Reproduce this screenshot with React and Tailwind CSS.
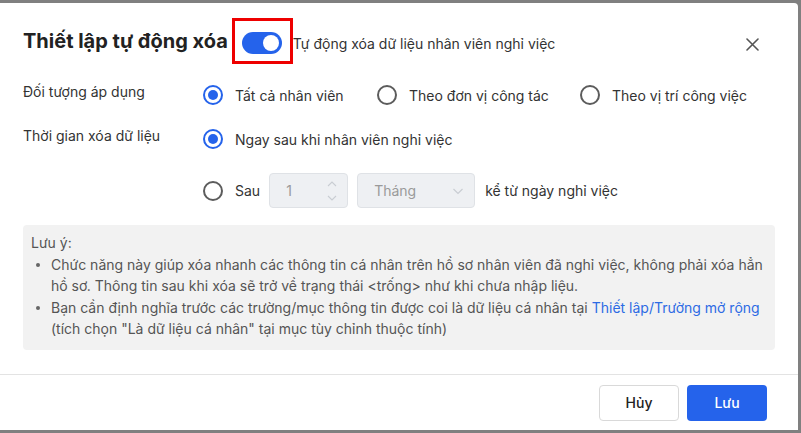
import React from "react";

const Radio = ({ checked }) => (
  <span
    className={`flex h-[20px] w-[20px] shrink-0 items-center justify-center rounded-full border-2 ${
      checked ? "border-[#2563eb]" : "border-[#5c5c5c]"
    }`}
  >
    {checked && <span className="h-[10px] w-[10px] rounded-full bg-[#2563eb]" />}
  </span>
);

const Option = ({ checked, label, className = "" }) => (
  <div className={`flex h-[20px] items-center ${className}`}>
    <Radio checked={checked} />
    <span className="ml-[12px] whitespace-nowrap text-[14px] text-[#333]">{label}</span>
  </div>
);

const App = () => {
  return (
    <div className="h-[433px] w-[801px] overflow-hidden bg-[#808080] pt-[3px] font-['Inter',sans-serif]">
      <div className="flex h-[427px] w-[798px] flex-col rounded-tr-[4px] bg-white">
        {/* Header */}
        <div className="flex items-center pl-[23px] pr-[39px] pt-[15px]">
          <h2 className="whitespace-nowrap text-[20px] font-bold leading-none text-[#222]">
            Thiết lập tự động xóa
          </h2>
          <div className="ml-[4px] flex h-[46px] w-[61px] items-center justify-center border-[3px] border-[#ee0000] pt-[3px]">
            <span className="flex h-[22px] w-[40px] items-center justify-end rounded-full bg-[#2563eb] pr-[3px]">
              <span className="h-[16px] w-[16px] rounded-full bg-white" />
            </span>
          </div>
          <span className="mt-[4px] whitespace-nowrap text-[14px] text-[#333]">
            Tự động xóa dữ liệu nhân viên nghỉ việc
          </span>
          <button className="ml-auto mt-[6px] flex h-[14px] w-[14px] items-center justify-center text-[#555]">
            <svg width="13" height="13" viewBox="0 0 13 13" fill="none" stroke="currentColor" strokeWidth="1.6" strokeLinecap="round">
              <path d="M1 1L12 12M12 1L1 12" />
            </svg>
          </button>
        </div>

        {/* Object row */}
        <div className="mt-[21px] flex items-start pl-[23px]">
          <div className="-mt-[3px] w-[180px] text-[14px] leading-[20px] text-[#333]">Đối tượng áp dụng</div>
          <Option checked label="Tất cả nhân viên" className="w-[174px]" />
          <Option label="Theo đơn vị công tác" className="w-[203px]" />
          <Option label="Theo vị trí công việc" />
        </div>

        {/* Time row */}
        <div className="mt-[24px] flex items-start pl-[23px]">
          <div className="-mt-[3px] w-[180px] text-[14px] leading-[20px] text-[#333]">Thời gian xóa dữ liệu</div>
          <Option checked label="Ngay sau khi nhân viên nghỉ việc" />
        </div>

        <div className="mt-[24px] flex h-[35px] items-center pl-[203px]">
          <Radio />
          <span className="ml-[12px] text-[14px] text-[#333]">Sau</span>
          <div className="ml-[9px] flex h-[35px] w-[79px] items-center justify-between rounded-[4px] border border-[#dfe2e6] bg-[#eef0f3] pl-[16px] pr-[9px]">
            <span className="text-[14px] text-[#9a9a9a]">1</span>
            <svg width="12" height="24" viewBox="0 0 12 24" fill="none" stroke="#c9cdd3" strokeWidth="1.1">
              <path d="M2 7L6 3L10 7M2 17L6 21L10 17" />
            </svg>
          </div>
          <div className="ml-[9px] flex h-[35px] w-[118px] items-center justify-between rounded-[4px] border border-[#dfe2e6] bg-[#eef0f3] pl-[16px] pr-[10px]">
            <span className="text-[14px] text-[#9a9a9a]">Tháng</span>
            <svg width="12" height="8" viewBox="0 0 12 8" fill="none" stroke="#c9cdd3" strokeWidth="1.2">
              <path d="M1.5 2L6 6.5L10.5 2" />
            </svg>
          </div>
          <span className="ml-[10px] whitespace-nowrap text-[14px] text-[#333]">kể từ ngày nghỉ việc</span>
        </div>

        {/* Note */}
        <div className="mx-[23px] mt-[17px] rounded-[4px] bg-[#f2f2f2] pb-[10px] pl-[8px] pt-[7px] text-[14px] leading-[21.5px] text-[#555]">
          <div>Lưu ý:</div>
          <div className="flex">
            <span className="ml-[5px] mt-[9px] h-[4px] w-[4px] shrink-0 rounded-full bg-[#666]" />
            <div className="ml-[11px] whitespace-nowrap">
              Chức năng này giúp xóa nhanh các thông tin cá nhân trên hồ sơ nhân viên đã nghỉ việc, không phải xóa hẳn
              <br />
              hồ sơ. Thông tin sau khi xóa sẽ trở về trạng thái &lt;trống&gt; như khi chưa nhập liệu.
            </div>
          </div>
          <div className="flex">
            <span className="ml-[5px] mt-[9px] h-[4px] w-[4px] shrink-0 rounded-full bg-[#666]" />
            <div className="ml-[11px] whitespace-nowrap">
              Bạn cần định nghĩa trước các trường/mục thông tin được coi là dữ liệu cá nhân tại{" "}
              <a className="text-[#2d6be4]">Thiết lập/Trường mở rộng</a>
              <br />
              (tích chọn "Là dữ liệu cá nhân" tại mục tùy chỉnh thuộc tính)
            </div>
          </div>
        </div>

        {/* Footer */}
        <div className="mt-[24px] flex justify-end gap-[8px] border-t border-[#e3e3e3] pb-[9px] pr-[31px] pt-[10px]">
          <button className="h-[36px] w-[80px] rounded-[4px] border border-[#d9d9d9] bg-white text-[14px] font-medium text-[#222]">
            Hủy
          </button>
          <button className="h-[36px] w-[80px] rounded-[4px] bg-[#2563eb] text-[14px] font-medium text-white">
            Lưu
          </button>
        </div>
      </div>
    </div>
  );
};

export default App;
